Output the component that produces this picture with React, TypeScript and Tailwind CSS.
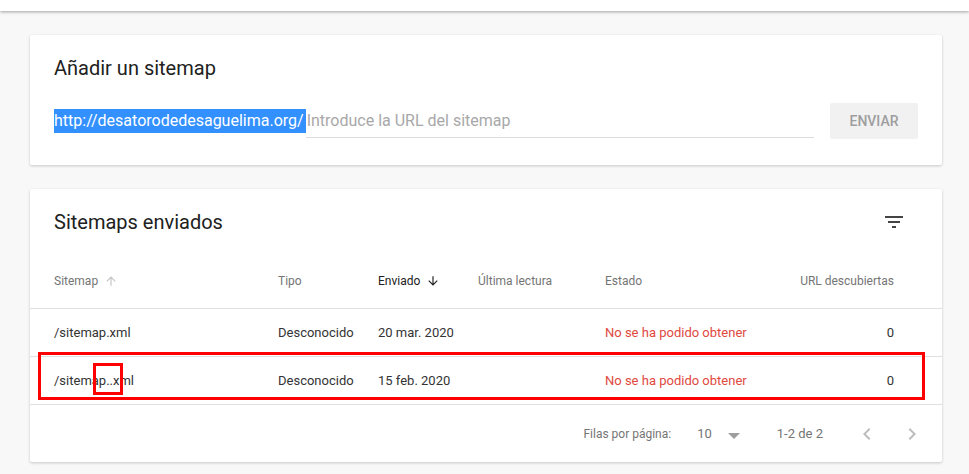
import React from "react";

const rows = [
  { name: "/sitemap.xml", tipo: "Desconocido", enviado: "20 mar. 2020", estado: "No se ha podido obtener", urls: "0" },
  { name: "/sitemap..xml", tipo: "Desconocido", enviado: "15 feb. 2020", estado: "No se ha podido obtener", urls: "0" },
];

const cols = "grid grid-cols-[224px_100px_100px_127px_1fr_120px] items-center pl-6 pr-12";

const FilterIcon = () => (
  <svg width="24" height="24" viewBox="0 0 24 24" fill="#444">
    <path d="M10 18h4v-2h-4v2zM3 6v2h18V6H3zm3 7h12v-2H6v2z" />
  </svg>
);

const Arrow = ({ up, color }: { up?: boolean; color: string }) => (
  <svg width="14" height="14" viewBox="0 0 24 24" fill={color} className="ml-1.5">
    {up ? (
      <path d="M4 12l1.41 1.41L11 7.83V20h2V7.83l5.58 5.59L20 12l-8-8-8 8z" />
    ) : (
      <path d="M20 12l-1.41-1.41L13 16.17V4h-2v12.17l-5.58-5.59L4 12l8 8 8-8z" />
    )}
  </svg>
);

const Chevron = ({ left }: { left?: boolean }) => (
  <svg width="24" height="24" viewBox="0 0 24 24" fill="#bdbdbd">
    {left ? (
      <path d="M15.41 7.41L14 6l-6 6 6 6 1.41-1.41L10.83 12z" />
    ) : (
      <path d="M10 6L8.59 7.41 13.17 12l-4.58 4.59L10 18l6-6z" />
    )}
  </svg>
);

export default function App() {
  return (
    <div className="min-h-[474px] bg-[#f8f8f8] font-['Roboto',sans-serif] text-[#212121]">
      <div className="h-[11px] bg-white shadow-[0_1px_3px_rgba(0,0,0,0.35)]" />
      <div className="px-[30px] pt-[24px] pr-[27px]">
        <div className="h-[130px] rounded-[2px] bg-white pl-6 pr-6 pt-[19px] shadow-[0_1px_3px_rgba(0,0,0,0.2)]">
          <h2 className="text-[20px] leading-[28px]">Añadir un sitemap</h2>
          <div className="mt-[21px] flex items-center">
            <div className="flex h-[33px] w-[760px] items-center">
              <span className="bg-[#3390ff] pr-[2px] text-[16px] leading-[24px] text-white">
                http://desatorodedesaguelima.org/
              </span>
              <span className="flex h-full flex-1 items-center border-b border-[#dcdcdc] pl-[1px] text-[16px] leading-[24px] text-[#a8a8a8]">
                Introduce la URL del sitemap
              </span>
            </div>
            <button className="ml-[16px] h-[36px] w-[88px] rounded-[2px] bg-[#f1f1f1] text-[14px] font-medium text-[#9e9e9e]">
              ENVIAR
            </button>
          </div>
        </div>

        <div className="relative mt-[24px] h-[273px] rounded-[2px] bg-white shadow-[0_1px_3px_rgba(0,0,0,0.2)]">
          <div className="flex h-[64px] items-center justify-between pl-6 pr-[36px] pt-[1px]">
            <h2 className="text-[20px] leading-[28px]">Sitemaps enviados</h2>
            <FilterIcon />
          </div>
          <div className={`${cols} h-[56px] border-b border-[#e0e0e0] text-[12px] text-[#757575]`}>
            <div className="flex items-center">
              Sitemap <Arrow up color="#c4c4c4" />
            </div>
            <div>Tipo</div>
            <div className="flex items-center text-[#212121]">
              Enviado <Arrow color="#212121" />
            </div>
            <div>Última lectura</div>
            <div>Estado</div>
            <div className="text-right">URL descubiertas</div>
          </div>
          {rows.map((r) => (
            <div key={r.enviado} className={`${cols} h-[48px] border-b border-[#e0e0e0] text-[13px] text-[#333]`}>
              <div>{r.name}</div>
              <div>{r.tipo}</div>
              <div>{r.enviado}</div>
              <div />
              <div className="text-[#e0483e]">{r.estado}</div>
              <div className="text-right">{r.urls}</div>
            </div>
          ))}
          <div className="flex h-[57px] items-center justify-end pr-[18px] text-[12px] text-[#757575]">
            <span>Filas por página:</span>
            <span className="ml-[26px] text-[13px]">10</span>
            <span className="ml-[16px] mt-[4px] h-0 w-0 border-x-[6px] border-t-[6px] border-x-transparent border-t-[#9e9e9e]" />
            <span className="ml-[37px] text-[13px]">1-2 de 2</span>
            <span className="ml-[32px]">
              <Chevron left />
            </span>
            <span className="ml-[21px]">
              <Chevron />
            </span>
          </div>

          <div className="absolute left-[8px] top-[163px] h-[48px] w-[887px] border-[3px] border-[#ff0000]" />
          <div className="absolute left-[63px] top-[174px] h-[32px] w-[30px] border-[3px] border-[#ff0000]" />
        </div>
      </div>
    </div>
  );
}
